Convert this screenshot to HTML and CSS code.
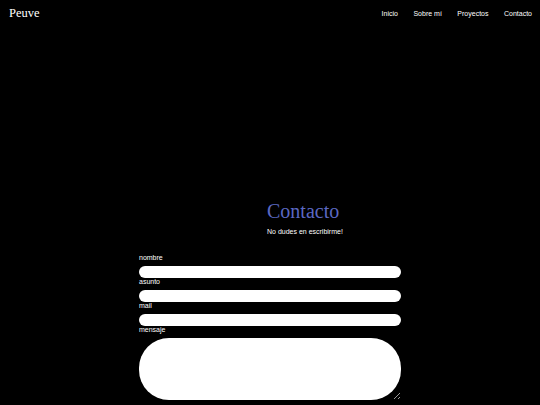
FILE: index.html
```html
<!DOCTYPE html>
<html lang="es">
<head>
<meta charset="utf-8">
<title>Peuve</title>
<link rel="stylesheet" href="styles.css">
</head>
<body>
<header class="topbar">
  <div class="logo">Peuve</div>
  <nav class="nav">
    <a href="#">Inicio</a>
    <a href="#">Sobre mí</a>
    <a href="#">Proyectos</a>
    <a href="#">Contacto</a>
  </nav>
</header>
<main class="contact">
  <div class="intro">
    <h1 class="title">Contacto</h1>
    <p class="subtitle">No dudes en escribirme!</p>
  </div>
  <form class="form">
    <label class="label" for="nombre">nombre</label>
    <input class="field" id="nombre" type="text">
    <label class="label" for="asunto">asunto</label>
    <input class="field" id="asunto" type="text">
    <label class="label" for="mail">mail</label>
    <input class="field" id="mail" type="text">
    <label class="label" for="mensaje">mensaje</label>
    <textarea class="area" id="mensaje"></textarea>
  </form>
</main>
</body>
</html>
```

FILE: styles.css
```css
html, body {
  margin: 0;
  padding: 0;
  background: #000;
  color: #fff;
}
body {
  font-family: "Liberation Sans", Arial, sans-serif;
}
.topbar {
  display: flex;
  justify-content: space-between;
  align-items: center;
  height: 26px;
  padding: 0 8px 0 9px;
}
.logo {
  font-family: "Liberation Serif", "Times New Roman", serif;
  font-size: 12.5px;
  color: #fff;
}
.nav {
  display: flex;
  gap: 15.5px;
}
.nav a {
  color: #fff;
  text-decoration: none;
  font-size: 7px;
}
.contact {
  width: 262px;
  margin: 0 auto;
  padding-top: 174px;
}
.intro {
  padding-left: 128px;
}
.title {
  margin: 0;
  font-family: "Liberation Serif", "Times New Roman", serif;
  font-weight: normal;
  font-size: 20px;
  line-height: 23px;
  color: #5b68c2;
}
.subtitle {
  margin: 4px 0 0;
  font-size: 7px;
  line-height: 9px;
}
.form {
  display: flex;
  flex-direction: column;
  margin-top: 18px;
}
.label {
  font-size: 7px;
  line-height: 8px;
  margin-bottom: 4px;
}
.field {
  box-sizing: border-box;
  width: 262px;
  height: 12px;
  border: none;
  border-radius: 6px;
  background: #fff;
  padding: 0 6px;
  margin: 0;
}
.area {
  box-sizing: border-box;
  width: 262px;
  height: 62px;
  border: none;
  border-radius: 30px;
  background: #fff;
  margin: 0;
  font-family: "Liberation Sans", Arial, sans-serif;
}
```
